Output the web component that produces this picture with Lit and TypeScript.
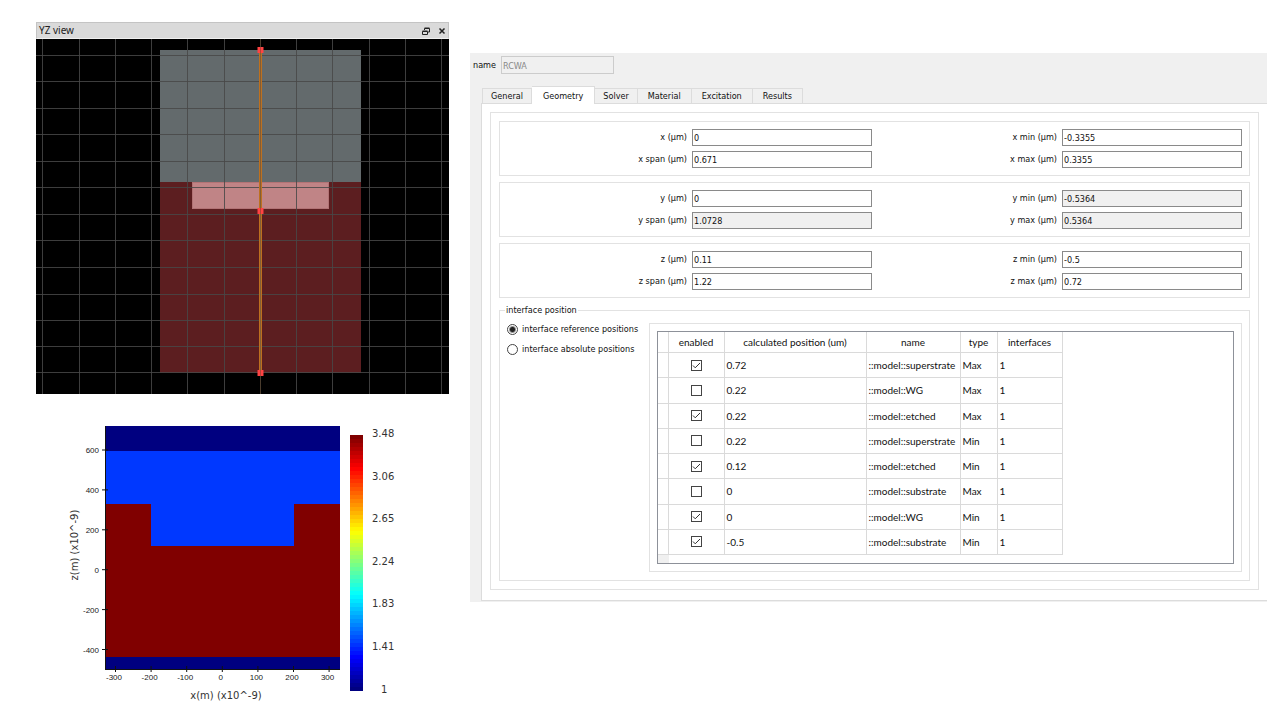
import { LitElement, html, svg, css } from "lit";
import { customElement, property, state } from "lit/decorators.js";
import { classMap } from "lit/directives/class-map.js";

const range = (n: number) => Array.from({ length: n }, (_, i) => i);

@customElement("yz-view")
class YzView extends LitElement {
  static styles = css`
    :host {
      display: block;
      background: #000;
      font-family: "Noto Sans", "Open Sans", sans-serif;
    }
    .bar {
      display: flex;
      align-items: center;
      gap: 8px;
      height: 17px;
      box-sizing: border-box;
      padding: 0 2px;
      background: #dadada;
      border: 1px solid #c4c4c4;
      border-bottom-color: #f0f0f0;
      color: #222;
      font-size: 10px;
      line-height: 15px;
    }
    .title {
      flex: 1;
    }
    .tool {
      display: block;
      width: 8px;
      height: 8px;
      padding: 0;
      border: 0;
      background: none;
    }
    .glyph {
      display: block;
      width: 8px;
      height: 8px;
    }
    .scene {
      display: block;
      width: 100%;
    }
  `;

  render() {
    const columns = [6, 43, 79, 115, 151, 188, 260, 296, 333, 369, 405];
    const rows = [16, 42, 69, 95, 122, 148, 175, 201, 228, 255, 281, 307, 333];
    return html`
      <div class="bar">
        <span class="title">YZ view</span>
        <button class="tool" aria-label="Float">
          <svg class="glyph" viewBox="0 0 8 8" fill="none" stroke="#222">
            <path d="M2.500 3V1.500h5v3.500H6M2.500 1h5" />
            <path d="M.5 4.500h5v3h-5zM.5 4h5" />
          </svg>
        </button>
        <button class="tool" aria-label="Close">
          <svg class="glyph" viewBox="0 0 8 8" fill="none" stroke="#222" stroke-width="1.500">
            <path d="M1.500 1.500l5 5M6.500 1.500l-5 5" />
          </svg>
        </button>
      </div>
      <svg class="scene" viewBox="0 0 413 355">
        <rect width="413" height="355" fill="#000" />
        <rect x="124" y="11" width="201" height="132" fill="#636a6c" />
        <rect x="124" y="143" width="201" height="191" fill="#5c1e20" />
        <rect x="156" y="143" width="137" height="27" fill="#c08486" />
        <rect x="156.500" y="143.500" width="136" height="26" fill="none" stroke="#a8686a" stroke-opacity=".6" />
        ${columns.map((x) => svg`<rect x=${x} width="1" height="355" fill="#484848" fill-opacity=".85" />`)}
        ${rows.map((y) => svg`<rect y=${y} width="413" height="1" fill="#484848" fill-opacity=".85" />`)}
        <rect x="223" y="11" width="3" height="323" fill="#bd701f" />
        <rect x="224" width="1" height="355" fill="#6a5540" fill-opacity=".7" />
        ${[11, 172, 334].map(
          (y) => svg`<rect x="221.500" y=${y - 3} width="6" height="6" fill="#ff4343" />
            <rect x="224" y=${y - 3} width="1" height="6" fill="#b84038" />`
        )}
      </svg>
    `;
  }
}

@customElement("index-plot")
class IndexPlot extends LitElement {
  static styles = css`
    :host {
      display: block;
    }
    .plot {
      display: block;
      width: 100%;
    }
    .tick {
      font: 8px "Liberation Sans", Arial, sans-serif;
      fill: #222;
    }
    .label {
      font: 10px "DejaVu Sans", Verdana, sans-serif;
      fill: #333;
    }
    .end {
      text-anchor: end;
    }
    .mid {
      text-anchor: middle;
    }
  `;

  private jet(t: number) {
    const c = (p: number) =>
      Math.round(255 * Math.max(0, Math.min(1, 1.5 - Math.abs(4 * t - p))));
    return `rgb(${c(3)},${c(2)},${c(1)})`;
  }

  render() {
    const scale = ["3.48", "3.06", "2.65", "2.24", "1.83", "1.41"];
    return html`
      <svg class="plot" viewBox="0 0 413 290">
        <g shape-rendering="crispEdges">
          <rect x="69" y="12" width="235" height="243" fill="#000080" />
          <rect x="69" y="37" width="235" height="206" fill="#0038ff" />
          <path d="M69 90h46v42h143v-42h46v153H69z" fill="#800000" />
          <path d="M69 12v243h235" fill="none" stroke="#111" />
          ${range(64).map(
            (i) => svg`<rect x="314" y=${21 + i * 4} width="13" height="4" fill=${this.jet(1 - i / 63)} />`
          )}
        </g>
        ${range(6).map(
          (i) => svg`<path d="M66 ${36 + i * 39.9}h6" stroke="#111" />
            <text class="tick end" x="63" y=${39 + i * 39.9}>${600 - i * 200}</text>`
        )}
        ${range(7).map(
          (i) => svg`<path d="M${79.5 + i * 35.6} 252v6" stroke="#111" />
            <text class="tick mid" x=${78 + i * 35.6} y="266">${i * 100 - 300}</text>`
        )}
        ${scale.map((v, i) => svg`<text class="label" x="336" y=${23 + i * 42.6}>${v}</text>`)}
        <text class="label" x="345" y="279">1</text>
        <text class="label mid" x="190" y="285">x(m) (x10^-9)</text>
        <text class="label mid" transform="translate(42 131) rotate(-90)">z(m) (x10^-9)</text>
      </svg>
    `;
  }
}

interface Field {
  id: string;
  label: string;
  value: string;
  locked?: boolean;
}

const field = (id: string, value: string, locked = false): Field => ({
  id: id.replace(" ", "-"),
  label: `${id} (µm)`,
  value,
  locked,
});

const GROUPS: Field[][] = [
  [field("x", "0"), field("x min", "-0.3355"), field("x span", "0.671"), field("x max", "0.3355")],
  [
    field("y", "0"),
    field("y min", "-0.5364", true),
    field("y span", "1.0728", true),
    field("y max", "0.5364", true),
  ],
  [field("z", "0.11"), field("z min", "-0.5"), field("z span", "1.22"), field("z max", "0.72")],
];

const INTERFACES: [boolean, string, string, string, string][] = [
  [true, "0.72", "::model::superstrate", "Max", "1"],
  [false, "0.22", "::model::WG", "Max", "1"],
  [true, "0.22", "::model::etched", "Max", "1"],
  [false, "0.22", "::model::superstrate", "Min", "1"],
  [true, "0.12", "::model::etched", "Min", "1"],
  [false, "0", "::model::substrate", "Max", "1"],
  [true, "0", "::model::WG", "Min", "1"],
  [true, "-0.5", "::model::substrate", "Min", "1"],
];

@customElement("interface-table")
class InterfaceTable extends LitElement {
  static styles = css`
    :host {
      display: block;
      border: 1px solid #8d9199;
      font: 10px/14px Lato, "Noto Sans", sans-serif;
    }
    .grid {
      border-collapse: collapse;
      table-layout: fixed;
      width: 404px;
      height: 223px;
      color: #111;
    }
    .c-mark {
      width: 10px;
    }
    .c-enabled {
      width: 56px;
    }
    .c-calc {
      width: 142px;
    }
    .c-name {
      width: 94px;
    }
    .c-type {
      width: 37px;
    }
    .c-count {
      width: 65px;
    }
    .head {
      height: 20px;
      padding: 0;
      font-weight: 400;
      text-align: center;
      border-right: 1px solid #dadada;
      border-bottom: 1px solid #dadada;
    }
    .cell {
      padding: 0 0 0 2px;
      white-space: nowrap;
      border-right: 1px solid #dadada;
      border-bottom: 1px solid #dadada;
    }
    .tick {
      text-align: center;
      padding: 0;
    }
    .box {
      appearance: none;
      display: block;
      box-sizing: border-box;
      width: 11px;
      height: 11px;
      margin: 0 auto;
      border: 1px solid #444;
      background: #fff;
    }
    .box:checked {
      background: url("data:image/svg+xml,%3Csvg xmlns='http://www.w3.org/2000/svg' viewBox='0 0 9 9'%3E%3Cpath d='M1 4.500l2.200 2.300L8 2' fill='none' stroke='%23333'/%3E%3C/svg%3E");
    }
    .corner {
      width: 11px;
      height: 8px;
      background: #f0f0f0;
    }
  `;

  render() {
    return html`
      <table class="grid">
        <colgroup>
          <col class="c-mark" />
          <col class="c-enabled" />
          <col class="c-calc" />
          <col class="c-name" />
          <col class="c-type" />
          <col class="c-count" />
        </colgroup>
        <thead>
          <tr>
            <td class="head"></td>
            ${["enabled", "calculated position (um)", "name", "type", "interfaces"].map(
              (h) => html`<th class="head" scope="col">${h}</th>`
            )}
          </tr>
        </thead>
        <tbody>
          ${INTERFACES.map(
            ([on, ...values]) => html`<tr>
              <td class="cell"></td>
              <td class="cell tick">
                <input class="box" type="checkbox" aria-label="enabled" .checked=${on} />
              </td>
              ${values.map((v) => html`<td class="cell">${v}</td>`)}
            </tr>`
          )}
        </tbody>
      </table>
      <div class="corner"></div>
    `;
  }
}

@customElement("object-editor")
class ObjectEditor extends LitElement {
  @property() name = "RCWA";
  @state() private tab = "Geometry";

  static styles = css`
    :host {
      display: block;
      background: #f0f0f0;
      padding: 3px 0 1px;
      font: 9px/13px "DejaVu Sans Condensed", "DejaVu Sans", Tahoma, sans-serif;
      font-stretch: condensed;
      color: #111;
    }
    .name-row {
      display: flex;
      align-items: center;
      gap: 5px;
      padding-left: 3px;
    }
    .text {
      box-sizing: border-box;
      height: 17px;
      min-width: 0;
      width: 100%;
      margin: 0;
      padding: 1px 1px 0;
      font: inherit;
      color: #111;
      border: 1px solid #8a8a8a;
      background: #fff;
    }
    .locked {
      background: #f0f0f0;
    }
    .name {
      width: 113px;
      height: 18px;
      color: #888;
      border-color: #ccc;
      background: #f0f0f0;
    }
    .tabs {
      display: flex;
      align-items: flex-end;
      height: 17px;
      margin: 12px 0 0 12px;
    }
    .tab {
      box-sizing: border-box;
      height: 15px;
      padding: 0 8px;
      font: inherit;
      line-height: 14px;
      color: inherit;
      background: #f0f0f0;
      border: 1px solid #dcdcdc;
      border-left-width: 0;
      border-bottom: 0;
    }
    .tab:first-child {
      border-left-width: 1px;
    }
    .tab:nth-child(n + 4) {
      padding: 0 10px;
    }
    .active {
      height: 18px;
      padding: 0 11px;
      margin-bottom: -1px;
      line-height: 16px;
      background: #fff;
    }
    .pane {
      margin-left: 11px;
      padding: 8px 8px 10px;
      background: #fff;
      border: 1px solid #dcdcdc;
      border-right: 0;
    }
    .frame {
      display: flex;
      flex-direction: column;
      gap: 6px;
      padding: 8px;
      border: 1px solid #e2e2e2;
    }
    .group {
      display: grid;
      grid-template-columns: 1fr 180px 1fr 180px;
      gap: 5px;
      align-items: center;
      padding: 7px;
      border: 1px solid #e2e2e2;
    }
    .label {
      text-align: right;
    }
    .set {
      display: grid;
      grid-template-columns: 142px 1fr;
      margin: 0;
      min-width: 0;
      padding: 6px 7px 8px;
      border: 1px solid #e2e2e2;
    }
    .legend {
      padding: 0 1px;
      margin-left: -2px;
    }
    .choices {
      display: flex;
      flex-direction: column;
      gap: 7px;
    }
    .choice {
      display: flex;
      align-items: center;
      gap: 4px;
      white-space: nowrap;
    }
    .radio {
      appearance: none;
      flex: none;
      box-sizing: border-box;
      width: 11px;
      height: 11px;
      margin: 0;
      border: 1px solid #444;
      border-radius: 50%;
      background: #fff;
    }
    .radio:checked {
      background: radial-gradient(circle, #222 2px, #fff 4px);
    }
    .inner {
      padding: 7px;
      border: 1px solid #e2e2e2;
    }
  `;

  render() {
    const tabs = ["General", "Geometry", "Solver", "Material", "Excitation", "Results"];
    return html`
      <div class="name-row">
        <label for="name">name</label>
        <input class="text name" id="name" disabled .value=${this.name} />
      </div>
      <div class="tabs" role="tablist">
        ${tabs.map(
          (t) => html`<button
            class=${classMap({ tab: true, active: t === this.tab })}
            role="tab"
            aria-selected=${t === this.tab}
            @click=${() => (this.tab = t)}
          >${t}</button>`
        )}
      </div>
      <div class="pane">
        <div class="frame">
          ${GROUPS.map(
            (g) => html`<div class="group">
              ${g.map(
                (f) => html`<label class="label" for=${f.id}>${f.label}</label>
                  <input
                    class=${classMap({ text: true, locked: !!f.locked })}
                    id=${f.id}
                    ?readonly=${f.locked}
                    .value=${f.value}
                  />`
              )}
            </div>`
          )}
          <fieldset class="set">
            <legend class="legend">interface position</legend>
            <div class="choices">
              <label class="choice">
                <input class="radio" type="radio" name="mode" checked />interface reference positions
              </label>
              <label class="choice">
                <input class="radio" type="radio" name="mode" />interface absolute positions
              </label>
            </div>
            <div class="inner"><interface-table></interface-table></div>
          </fieldset>
        </div>
      </div>
    `;
  }
}

@customElement("app-root")
class AppRoot extends LitElement {
  static styles = css`
    :host {
      display: grid;
      grid-template-columns: minmax(0, 413px) minmax(0, 1fr);
      align-items: start;
      gap: 21px;
      padding: 22px 13px 16px 36px;
      background: #fff;
    }
    .views {
      display: grid;
      gap: 20px;
    }
    .editor {
      margin-top: 31px;
    }
  `;

  render() {
    return html`
      <div class="views">
        <yz-view></yz-view>
        <index-plot></index-plot>
      </div>
      <object-editor class="editor"></object-editor>
    `;
  }
}
